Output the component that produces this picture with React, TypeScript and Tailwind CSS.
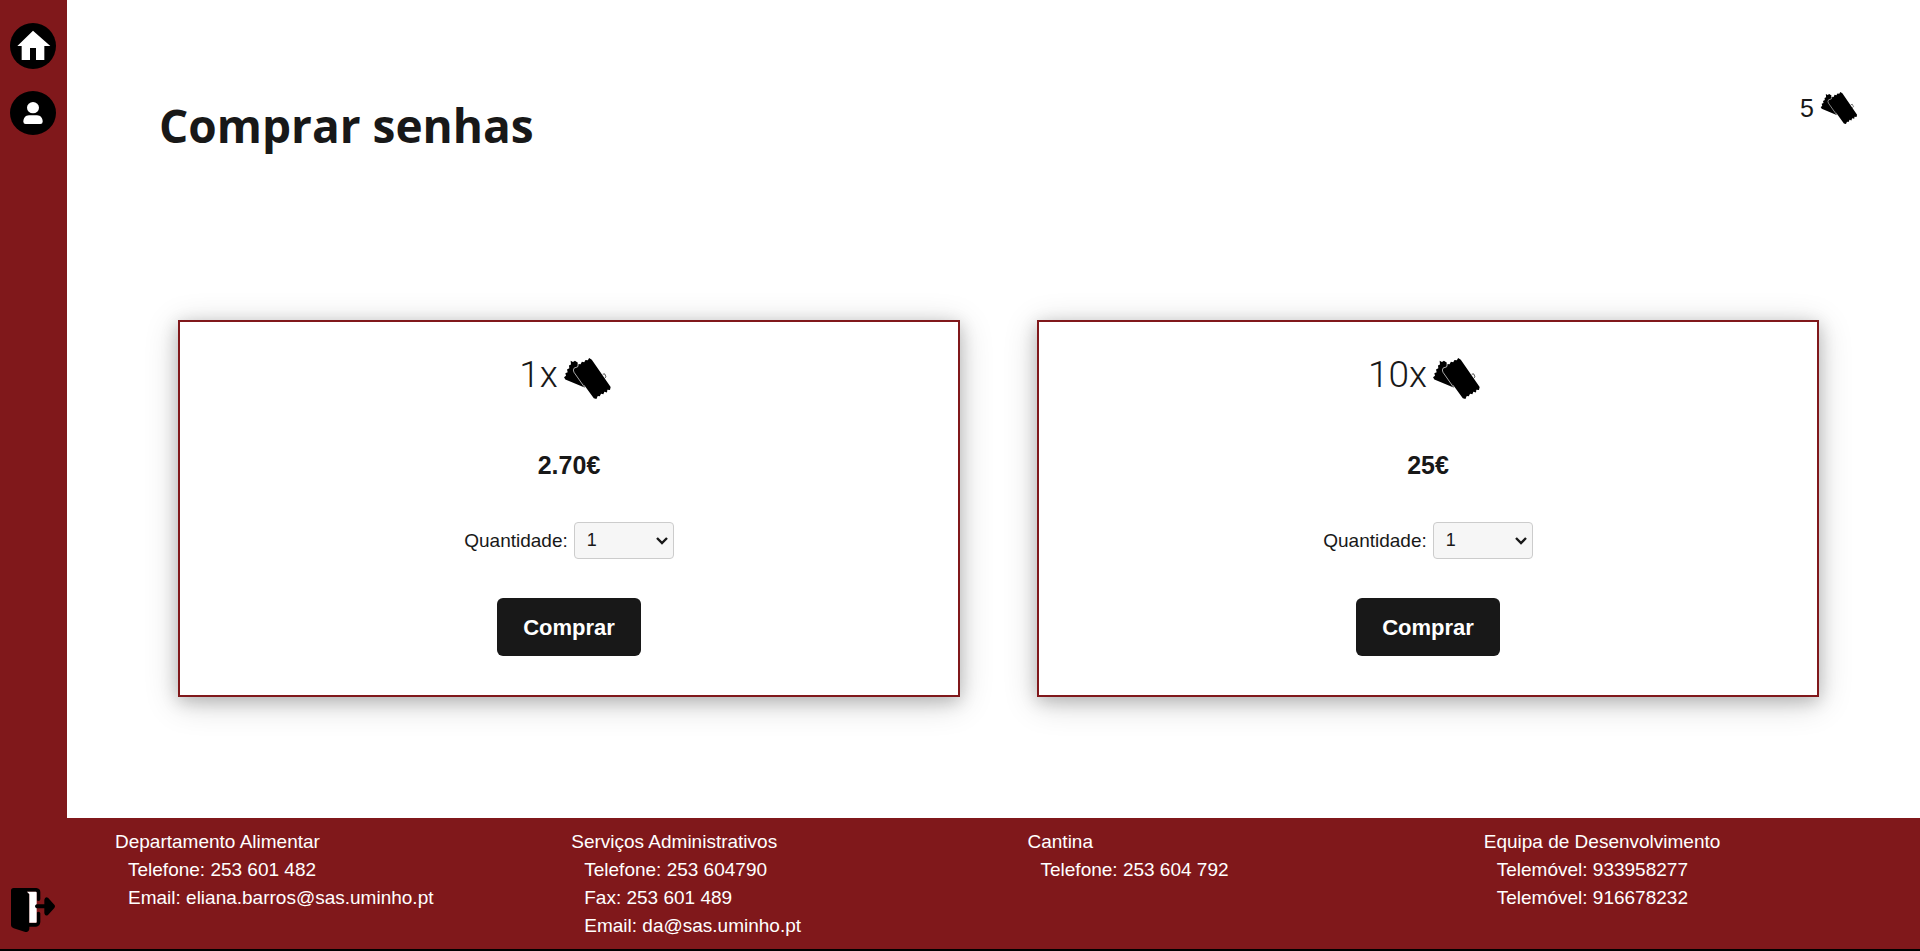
import { useId } from "react";

function HomeIcon() {
  return (
    <svg viewBox="0 0 138 138" className="size-[46px]" aria-hidden="true">
      <circle cx="69" cy="69" r="69" fill="#000" />
      <path d="M69 23 L121 69 H103 V111 H78 V75 H60 V111 H35 V69 H22 Z" fill="#fff" />
    </svg>
  );
}

function UserIcon() {
  return (
    <svg viewBox="0 0 138 132" className="h-[44px] w-[46px]" aria-hidden="true">
      <ellipse cx="69" cy="66" rx="69" ry="66" fill="#000" />
      <ellipse cx="69" cy="50" rx="18" ry="17" fill="#fff" />
      <path d="M57 73 H81 C92 73 98 82 98 92 Q98 99 91 99 H47 Q40 99 40 92 C40 82 46 73 57 73 Z" fill="#fff" />
    </svg>
  );
}

function ExitIcon() {
  return (
    <svg viewBox="0 0 132 132" className="size-[44px]" aria-hidden="true">
      <path d="M8 0 H76 Q88 1 88 13 V34 Q88 39 82 39 Q77 39 77 34 V13 Q77 11 74 11 H48 L55 17 V105 H75 Q77 105 77 102 V76 Q77 71 82 71 Q88 71 88 76 V102 Q87 115 75 116 H55 V122 Q54 132 43 132 L8 121 Q0 118 0 112 V8 Q0 0 8 0 Z" fill="#000" />
      <path d="M48 11 H75 Q77 11 77 14 V102 Q77 104 75 104 H55 V19 Z" fill="#fff" />
      <path d="M77 49 H100 V35 Q102 24 111 29 L130 50 Q134 55 130 60 L111 81 Q102 86 100 76 V61 H77 Q72 60 72 55 Q72 50 77 49 Z" fill="#000" />
    </svg>
  );
}

function TicketsIcon({ className }: { className: string }) {
  return (
    <svg viewBox="0 0 142 124" className={className} aria-hidden="true">
      <path d="M20 8 L27 12 L33 8 L42 14 L40 28 L64 90 L4 65 L0 58 L6 54 L4 46 L11 43 L9 35 L16 31 L15 23 L21 20 Z" fill="#000" />
      <path d="M76 0 L84 5 L141 88 L139 97 L131 96 L130 104 L122 102 L119 110 L112 108 L108 116 L102 115 L98 124 L90 122 L29 38 L30 28 L38 27 L42 18 L50 19 L54 11 L61 13 L65 6 L72 7 Z" fill="#000" />
      <path d="M63 90 L30 43 Q26 36 31 30 L41 27 Q44 21 43 14" fill="none" stroke="#fff" strokeWidth="2" />
      <path d="M117 49 L123 48 L127 57 L123 61" fill="none" stroke="#000" strokeWidth="2" />
    </svg>
  );
}

function TicketCard({ count, price }: { count: number; price: string }) {
  const id = useId();
  return (
    <section className="flex flex-col items-center border-2 border-[#80181b] bg-white px-4 pt-[29px] pb-[39px] shadow-[0_4px_16px_rgba(0,0,0,0.2),0_6px_32px_rgba(0,0,0,0.19)]">
      <h2 className="flex items-center gap-[6px] pr-2 font-['Roboto',sans-serif] text-[37px] leading-[48px] font-light">
        {count}x
        <TicketsIcon className="mt-[7px] h-[41px] w-[47px]" />
      </h2>
      <p className="mt-[52px] text-[25px] leading-7 font-bold">{price}</p>
      <div className="mt-[43px] flex items-center gap-[6px]">
        <label htmlFor={id} className="text-[19px] leading-6">Quantidade:</label>
        <div className="relative">
          <select
            id={id}
            defaultValue="1"
            className="block h-[37px] w-[100px] appearance-none rounded-[4px] border border-[#cccccc] bg-[#f6f6f6] px-3 text-[18px] text-[#181818]"
          >
            {["1", "2", "3", "4", "5"].map((n) => (
              <option key={n}>{n}</option>
            ))}
          </select>
          <svg viewBox="0 0 12 8" className="pointer-events-none absolute top-[15px] right-[6px] h-2 w-3" aria-hidden="true">
            <path d="M1 1 L6 6 L11 1" fill="none" stroke="#181818" strokeWidth="2.4" />
          </svg>
        </div>
      </div>
      <button type="button" className="mt-[39px] h-[58px] w-36 rounded-[6px] bg-[#181818] text-[22px] font-bold text-white">
        Comprar
      </button>
    </section>
  );
}

const contacts = [
  { title: "Departamento Alimentar", lines: ["Telefone: 253 601 482", "Email: eliana.barros@sas.uminho.pt"] },
  { title: "Serviços Administrativos", lines: ["Telefone: 253 604790", "Fax: 253 601 489", "Email: da@sas.uminho.pt"] },
  { title: "Cantina", lines: ["Telefone: 253 604 792"] },
  { title: "Equipa de Desenvolvimento", lines: ["Telemóvel: 933958277", "Telemóvel: 916678232"] },
];

export default function App() {
  return (
    <div className="flex min-h-screen border-b-2 border-black bg-white font-['Liberation_Sans',Arial,sans-serif] text-[#181818]">
      <nav className="flex w-[67px] shrink-0 flex-col items-center bg-[#80181b] pt-[23px] pr-px pb-[17px]">
        <a href="#inicio" aria-label="Início"><HomeIcon /></a>
        <a href="#perfil" aria-label="Perfil" className="mt-[22px]"><UserIcon /></a>
        <a href="#sair" aria-label="Sair" className="mt-auto"><ExitIcon /></a>
      </nav>
      <div className="flex min-w-0 flex-1 flex-col">
        <main className="flex-1">
          <header className="flex items-start justify-between pt-[90px] pr-[62px] pl-[92px]">
            <h1 className="font-['Open_Sans',sans-serif] text-[46px] leading-[70px] font-bold">Comprar senhas</h1>
            <div className="flex items-center gap-[6px] pt-[2px] text-[25px] leading-8">
              <span>5</span>
              <TicketsIcon className="h-8 w-[38px]" />
            </div>
          </header>
          <div className="grid grid-cols-2 gap-[77px] pt-[160px] pr-[101px] pb-[60px] pl-[111px]">
            <TicketCard count={1} price="2.70€" />
            <TicketCard count={10} price="25€" />
          </div>
        </main>
        <footer className="grid grid-cols-4 bg-[#80181b] px-[14px] pt-[10px] pb-[9px] text-[19px] leading-7 text-white">
          {contacts.map((c) => (
            <div key={c.title} className="pl-[34px]">
              <h3>{c.title}</h3>
              <ul className="pl-[13px]">
                {c.lines.map((line) => (
                  <li key={line}>{line}</li>
                ))}
              </ul>
            </div>
          ))}
        </footer>
      </div>
    </div>
  );
}
